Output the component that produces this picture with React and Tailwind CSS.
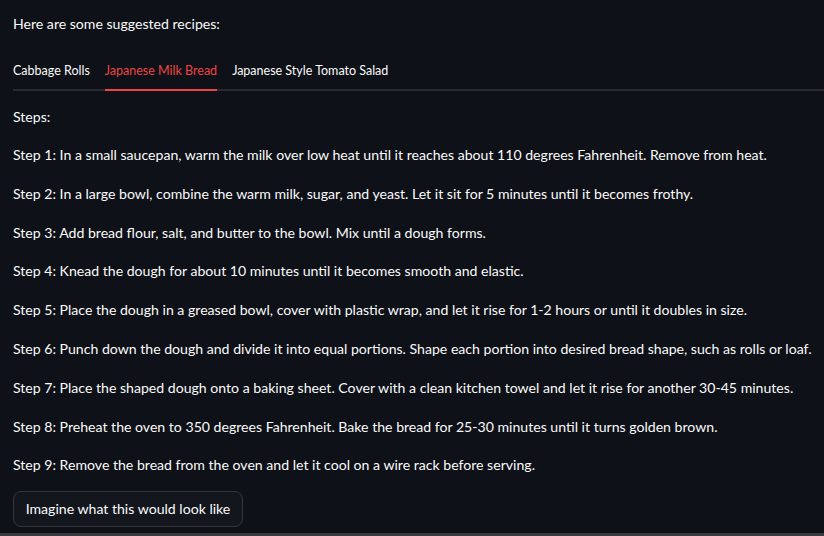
import { useState } from 'react';

const steps = [
  'Step 1: In a small saucepan, warm the milk over low heat until it reaches about 110 degrees Fahrenheit. Remove from heat.',
  'Step 2: In a large bowl, combine the warm milk, sugar, and yeast. Let it sit for 5 minutes until it becomes frothy.',
  'Step 3: Add bread flour, salt, and butter to the bowl. Mix until a dough forms.',
  'Step 4: Knead the dough for about 10 minutes until it becomes smooth and elastic.',
  'Step 5: Place the dough in a greased bowl, cover with plastic wrap, and let it rise for 1-2 hours or until it doubles in size.',
  'Step 6: Punch down the dough and divide it into equal portions. Shape each portion into desired bread shape, such as rolls or loaf.',
  'Step 7: Place the shaped dough onto a baking sheet. Cover with a clean kitchen towel and let it rise for another 30-45 minutes.',
  'Step 8: Preheat the oven to 350 degrees Fahrenheit. Bake the bread for 25-30 minutes until it turns golden brown.',
  'Step 9: Remove the bread from the oven and let it cool on a wire rack before serving.',
];

const tabs = ['Cabbage Rolls', 'Japanese Milk Bread', 'Japanese Style Tomato Salad'];

export default function App() {
  const [active, setActive] = useState(1);

  return (
    <div
      className="h-[536px] w-[824px] overflow-hidden bg-[#0e1117] text-[#fafafa] text-[14.1px] flex flex-col"
      style={{ fontFamily: 'Lato, "Liberation Sans", sans-serif' }}
    >
      <div className="flex-1 pl-[13px]">
        <p className="mt-[14px] leading-[20px]">Here are some suggested recipes:</p>

        <div className="mt-[27px] flex gap-[15px] border-b-2 border-[#2a2b32]">
          {tabs.map((t, i) => (
            <button
              key={t}
              onClick={() => setActive(i)}
              className={
                'pb-[8px] text-[12.5px] leading-[20px] -mb-[2px] border-b-2 ' +
                (i === active ? 'text-[#ef4444] border-[#ef4444]' : 'border-transparent')
              }
            >
              {t}
            </button>
          ))}
        </div>

        <p className="mt-[16px] leading-[20px]">Steps:</p>

        <div className="mt-[18px] flex flex-col gap-[18.8px]">
          {steps.map((s) => (
            <p key={s} className="leading-[20px] whitespace-nowrap">{s}</p>
          ))}
        </div>

        <button className="mt-[16px] h-[36px] w-[230px] rounded-[8px] border border-[#34363e] bg-[#13161d] leading-[20px]">
          Imagine what this would look like
        </button>
      </div>
      <div className="h-[3px] bg-[#3a3b40]" />
    </div>
  );
}
